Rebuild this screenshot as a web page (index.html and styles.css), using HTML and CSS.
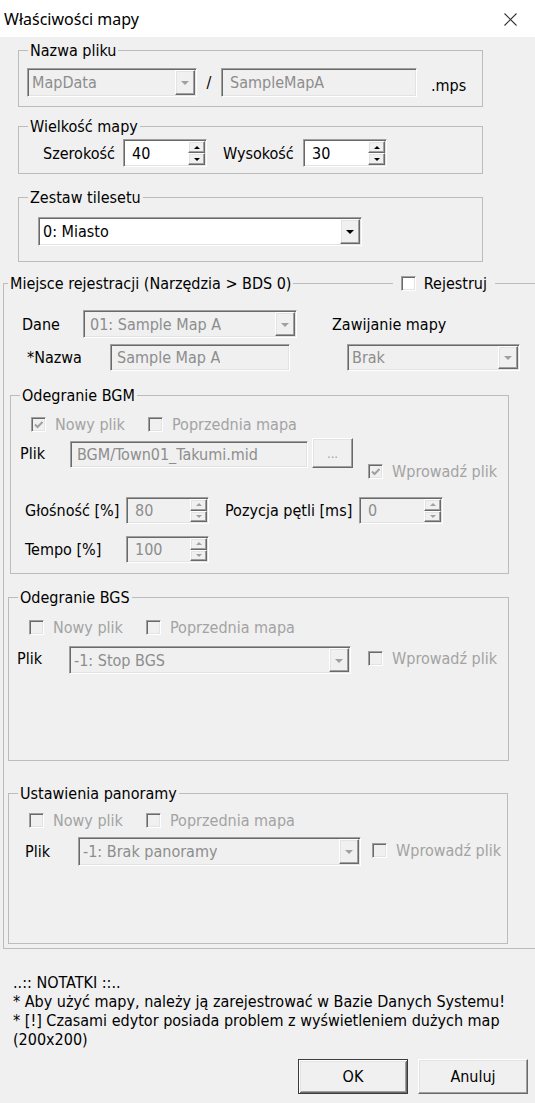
FILE: index.html
```html
<!DOCTYPE html>
<html lang="pl">
<head>
<meta charset="utf-8">
<title>Właściwości mapy</title>
<link rel="stylesheet" href="styles.css">
</head>
<body>
<div class="dialog">
  <header class="titlebar">
    <span class="title">Właściwości mapy</span>
    <svg class="close" width="15" height="15" viewBox="0 0 15 15"><path d="M1.5 1.5L13.5 13.5M13.5 1.5L1.5 13.5" stroke="#333" stroke-width="1.1" fill="none"/></svg>
  </header>
  <main class="content">
    <fieldset class="group g-file">
      <legend>Nazwa pliku</legend>
      <div class="row file-row">
        <div class="combo sunken mapdata"><span class="val">MapData</span><span class="dd raised"><i class="tri"></i></span></div>
        <span class="slash">/</span>
        <div class="field sunken samplemap"><span class="val">SampleMapA</span></div>
        <span class="ext">.mps</span>
      </div>
    </fieldset>

    <fieldset class="group g-size">
      <legend>Wielkość mapy</legend>
      <div class="row size-row">
        <span class="lbl lbl-szer">Szerokość</span>
        <div class="spin sunken on size-spin"><span class="val">40</span><span class="spin-btns"><span class="raised"><i class="tri-up"></i></span><span class="raised"><i class="tri-down"></i></span></span></div>
        <span class="lbl lbl-wys">Wysokość</span>
        <div class="spin sunken on size-spin"><span class="val">30</span><span class="spin-btns"><span class="raised"><i class="tri-up"></i></span><span class="raised"><i class="tri-down"></i></span></span></div>
      </div>
    </fieldset>

    <fieldset class="group g-tiles">
      <legend>Zestaw tilesetu</legend>
      <div class="row tiles-row">
        <div class="combo sunken on tiles-combo"><span class="val">0: Miasto</span><span class="dd raised"><i class="tri"></i></span></div>
      </div>
    </fieldset>

    <fieldset class="group g-reg">
      <legend class="reg-legend"><span>Miejsce rejestracji (Narzędzia &gt; BDS 0)</span><span class="legend-line"></span><span class="cb sunken on"></span><span class="reg-text">Rejestruj</span></legend>
      <div class="row reg-a">
        <span class="lbl lbl-dane">Dane</span>
        <div class="combo sunken dane-combo"><span class="val">01: Sample Map A</span><span class="dd raised"><i class="tri"></i></span></div>
        <span class="lbl lbl-zaw">Zawijanie mapy</span>
      </div>
      <div class="row reg-b">
        <span class="lbl lbl-nazwa">*Nazwa</span>
        <div class="field sunken nazwa-field"><span class="val">Sample Map A</span></div>
        <div class="combo sunken brak-combo"><span class="val">Brak</span><span class="dd raised"><i class="tri"></i></span></div>
      </div>

      <fieldset class="group g-bgm">
        <legend>Odegranie BGM</legend>
        <div class="row chk-row">
          <span class="chk chk-first"><span class="cb sunken"><svg width="11" height="11" viewBox="0 0 11 11"><path d="M2 5.5L4.5 8L9.5 3" stroke="#a0a0a0" stroke-width="2" fill="none"/></svg></span><span class="chk-text">Nowy plik</span></span>
          <span class="chk"><span class="cb sunken"></span><span class="chk-text">Poprzednia mapa</span></span>
        </div>
        <div class="row plik-row">
          <span class="lbl lbl-plik-bgm">Plik</span>
          <div class="field sunken bgm-field"><span class="val">BGM/Town01_Takumi.mid</span></div>
          <span class="btn-small raised">...</span>
          <span class="chk chk-wpr bgm-wpr"><span class="cb sunken"><svg width="11" height="11" viewBox="0 0 11 11"><path d="M2 5.5L4.5 8L9.5 3" stroke="#a0a0a0" stroke-width="2" fill="none"/></svg></span><span class="chk-text">Wprowadź plik</span></span>
        </div>
        <div class="row vol-row">
          <span class="lbl lbl-vol">Głośność [%]</span>
          <div class="spin sunken vol-spin"><span class="val">80</span><span class="spin-btns"><span class="raised"><i class="tri-up"></i></span><span class="raised"><i class="tri-down"></i></span></span></div>
          <span class="lbl lbl-poz">Pozycja pętli [ms]</span>
          <div class="spin sunken poz-spin"><span class="val">0</span><span class="spin-btns"><span class="raised"><i class="tri-up"></i></span><span class="raised"><i class="tri-down"></i></span></span></div>
        </div>
        <div class="row tempo-row">
          <span class="lbl lbl-vol">Tempo [%]</span>
          <div class="spin sunken vol-spin"><span class="val">100</span><span class="spin-btns"><span class="raised"><i class="tri-up"></i></span><span class="raised"><i class="tri-down"></i></span></span></div>
        </div>
      </fieldset>

      <fieldset class="group g-bgs">
        <legend>Odegranie BGS</legend>
        <div class="row chk-row">
          <span class="chk chk-first"><span class="cb sunken"></span><span class="chk-text">Nowy plik</span></span>
          <span class="chk"><span class="cb sunken"></span><span class="chk-text">Poprzednia mapa</span></span>
        </div>
        <div class="row plik-row2">
          <span class="lbl lbl-plik-bgs">Plik</span>
          <div class="combo sunken bgs-combo"><span class="val">-1: Stop BGS</span><span class="dd raised"><i class="tri"></i></span></div>
          <span class="chk chk-wpr bgs-wpr"><span class="cb sunken"></span><span class="chk-text">Wprowadź plik</span></span>
        </div>
      </fieldset>

      <fieldset class="group g-pan">
        <legend>Ustawienia panoramy</legend>
        <div class="row chk-row">
          <span class="chk chk-first"><span class="cb sunken"></span><span class="chk-text">Nowy plik</span></span>
          <span class="chk"><span class="cb sunken"></span><span class="chk-text">Poprzednia mapa</span></span>
        </div>
        <div class="row plik-row2">
          <span class="lbl lbl-plik-pan">Plik</span>
          <div class="combo sunken pan-combo"><span class="val">-1: Brak panoramy</span><span class="dd raised"><i class="tri"></i></span></div>
          <span class="chk chk-wpr pan-wpr"><span class="cb sunken"></span><span class="chk-text">Wprowadź plik</span></span>
        </div>
      </fieldset>
    </fieldset>

    <div class="notes">..:: NOTATKI ::..<br>* Aby użyć mapy, należy ją zarejestrować w Bazie Danych Systemu!<br>* [!] Czasami edytor posiada problem z wyświetleniem dużych map<br>(200x200)</div>

    <div class="actions">
      <span class="btn btn-default">OK</span>
      <span class="btn raised">Anuluj</span>
    </div>
  </main>
</div>
</body>
</html>
```

FILE: styles.css
```css
* { box-sizing: border-box; }
html, body { margin: 0; padding: 0; }
body {
  width: 535px;
  height: 1103px;
  overflow: hidden;
  background: #f0f0f0;
  font-family: "DejaVu Sans Condensed", "DejaVu Sans", sans-serif;
  font-size: 16px;
  color: #000;
}
.dialog {
  width: 535px;
  height: 1103px;
  overflow: hidden;
  display: flex;
  flex-direction: column;
  background: #f0f0f0;
}
.titlebar {
  height: 37px;
  flex: none;
  background: #fff;
  display: flex;
  align-items: center;
  justify-content: space-between;
  padding: 1px 17px 0 4px;
}
.title {
  font-family: "Noto Sans", "Open Sans", sans-serif;
  font-size: 16px;
  color: #000;
}
.close { display: block; }

.content {
  display: flex;
  flex-direction: column;
  align-items: flex-start;
}

/* group boxes */
.group {
  margin: 0;
  padding: 0;
  border: 1px solid #bcbcbc;
  min-width: 0;
}
.group > legend {
  padding: 0 2px;
  height: 17px;
  line-height: 17px;
  margin-left: 9px;
}
.g-file { margin: 5px 0 0 18px; width: 465px; padding-bottom: 9px; }
.g-size { margin: 11px 0 0 18px; width: 465px; padding-bottom: 6px; }
.g-tiles { margin: 15px 0 0 18px; width: 465px; padding-bottom: 15px; }
.g-reg { margin: 13px 0 0 3px; width: 534px; padding-bottom: 4px; }
.g-bgm { margin: 16px 0 0 6px; width: 499px; padding-bottom: 10px; }
.g-bgs { margin: 15px 0 0 4px; width: 501px; padding-bottom: 86px; }
.g-pan { margin: 24px 0 0 4px; width: 500px; padding-bottom: 77px; }

.g-reg > .reg-legend {
  margin-left: 4px;
  width: 487px;
  padding: 0 8px 0 2px;
  display: flex;
  align-items: center;
  white-space: nowrap;
}
.legend-line {
  flex: 1;
  height: 1px;
  background: #bcbcbc;
  margin: 0 8px 0 2px;
}
.reg-text { margin-left: 8px; }

/* 3D borders */
.sunken {
  border: 1px solid;
  border-color: #a0a0a0 #ffffff #ffffff #a0a0a0;
  box-shadow: inset 1px 1px 0 #696969, inset -1px -1px 0 #e3e3e3;
}
.raised {
  border: 1px solid;
  border-color: #ffffff #696969 #696969 #ffffff;
  box-shadow: inset -1px -1px 0 #a0a0a0, inset 1px 1px 0 #e3e3e3;
  background: #f0f0f0;
}

.row { display: flex; align-items: center; }
.lbl { flex: none; white-space: nowrap; }
.val { white-space: nowrap; overflow: hidden; }

/* fields */
.field, .combo, .spin {
  flex: none;
  display: flex;
  align-items: center;
  padding: 1px;
  background: #f0f0f0;
  color: #8d8d8d;
}
.field .val { padding-left: 5px; }
.combo .val { padding-left: 3px; }
.spin .val { padding-left: 7px; }
.on { background: #fff; color: #000; }
.dd {
  margin-left: auto;
  width: 20px;
  align-self: stretch;
  display: flex;
  align-items: center;
  justify-content: center;
}
.tri {
  width: 0; height: 0;
  border-left: 4px solid transparent;
  border-right: 4px solid transparent;
  border-top: 4px solid #a0a0a0;
  margin-top: 1px;
}
.on .tri { border-top-color: #000; }

.spin-btns {
  margin-left: auto;
  width: 17px;
  align-self: stretch;
  display: flex;
  flex-direction: column;
}
.spin-btns > span {
  flex: 1;
  display: flex;
  align-items: center;
  justify-content: center;
}
.tri-up, .tri-down {
  width: 0; height: 0;
  border-left: 3px solid transparent;
  border-right: 3px solid transparent;
}
.tri-up { border-bottom: 3px solid #a0a0a0; }
.tri-down { border-top: 3px solid #a0a0a0; }
.on .tri-up { border-bottom-color: #000; }
.on .tri-down { border-top-color: #000; }

/* checkboxes */
.cb {
  width: 15px;
  height: 15px;
  flex: none;
  display: flex;
  align-items: center;
  justify-content: center;
  background: #f0f0f0;
}
.cb.on { background: #fff; }
.chk { display: flex; align-items: center; flex: none; }
.chk-text { margin-left: 9px; color: #a3a3a3; white-space: nowrap; }
.chk-row { height: 16px; margin-top: 12px; }
.chk-first { margin-left: 20px; width: 117px; }
.g-bgs .chk-row { margin-top: 13px; }
.g-pan .chk-row { margin-top: 10px; }

/* Nazwa pliku */
.file-row { margin-top: 9px; height: 29px; }
.mapdata { margin-left: 8px; width: 170px; height: 29px; }
.slash { width: 24px; text-align: center; }
.samplemap { width: 196px; height: 29px; }
.samplemap .val { padding-left: 7px; }
.ext { margin-left: 14px; margin-top: 5px; }

/* Wielkość mapy */
.size-row { margin-top: 4px; height: 28px; }
.lbl-szer { margin-left: 24px; width: 80px; }
.lbl-wys { margin-left: 16px; width: 80px; }
.size-spin { width: 84px; height: 28px; }

/* Zestaw tilesetu */
.tiles-row { margin-top: 11px; }
.tiles-combo { margin-left: 19px; width: 324px; height: 29px; }

/* Miejsce rejestracji */
.reg-a { margin-top: 18px; height: 28px; }
.lbl-dane { margin-left: 18px; width: 61px; }
.dane-combo { width: 214px; height: 28px; }
.dane-combo .val { padding-left: 5px; }
.lbl-zaw { margin-left: 35px; }
.reg-b { margin-top: 6px; height: 27px; }
.lbl-nazwa { margin-left: 23px; width: 83px; }
.nazwa-field { width: 180px; height: 27px; }
.brak-combo { margin-left: 57px; width: 173px; height: 27px; }

/* BGM */
.plik-row { margin-top: 6px; align-items: flex-start; height: 39px; }
.lbl-plik-bgm { margin-left: 9px; width: 50px; margin-top: 6px; }
.bgm-field { width: 238px; height: 27px; margin-top: 3px; }
.btn-small {
  margin-left: 4px;
  width: 41px;
  height: 30px;
  display: flex;
  align-items: center;
  justify-content: center;
  color: #a0a0a0;
  font-size: 13px;
  flex: none;
}
.bgm-wpr { margin-left: 15px; margin-top: 24px; }
.vol-row { margin-top: 20px; height: 27px; }
.tempo-row { margin-top: 12px; height: 27px; }
.lbl-vol { margin-left: 14px; width: 101px; }
.vol-spin { width: 83px; height: 27px; }
.lbl-poz { margin-left: 16px; width: 134px; }
.poz-spin { width: 84px; height: 27px; }

/* BGS / panorama */
.plik-row2 { margin-top: 11px; align-items: flex-start; height: 28px; }
.g-pan .plik-row2 { margin-top: 9px; height: 29px; }
.lbl-plik-bgs { margin-left: 8px; width: 52px; margin-top: 3px; }
.lbl-plik-pan { margin-left: 16px; width: 53px; margin-top: 5px; }
.bgs-combo { width: 282px; height: 28px; }
.pan-combo { width: 283px; height: 29px; }
.bgs-wpr { margin-left: 17px; margin-top: 3px; }
.pan-wpr { margin-left: 11px; margin-top: 4px; }

/* notes and buttons */
.notes {
  margin: 24px 0 0 13px;
  line-height: 19px;
  white-space: nowrap;
}
.actions {
  align-self: stretch;
  display: flex;
  justify-content: flex-end;
  gap: 10px;
  padding-right: 7px;
  margin-top: 10px;
}
.btn {
  width: 110px;
  height: 35px;
  display: flex;
  align-items: center;
  justify-content: center;
  flex: none;
}
.btn-default {
  background: #f0f0f0;
  border: 1px solid #3c3c3c;
  box-shadow: inset 1px 1px 0 #fff, inset -1px -1px 0 #696969, inset 2px 2px 0 #e3e3e3, inset -2px -2px 0 #a0a0a0;
}
```
